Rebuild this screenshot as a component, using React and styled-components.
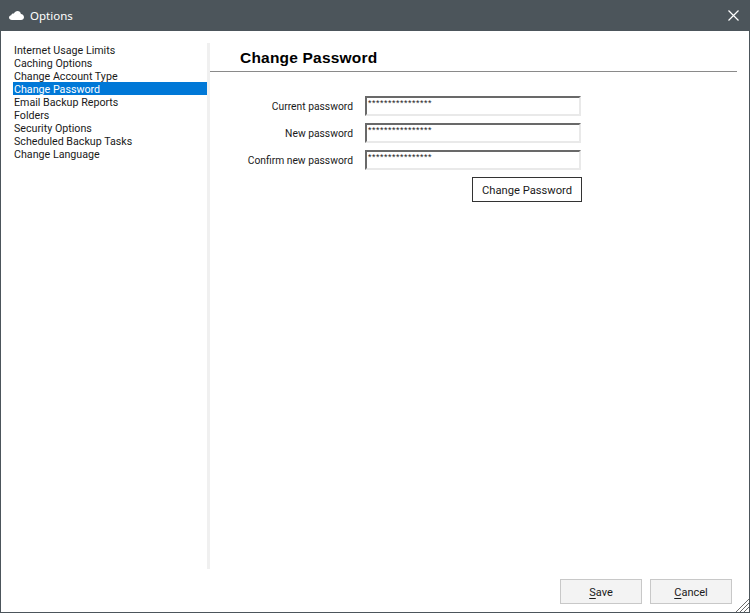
import React from "react";
import styled, { createGlobalStyle } from "styled-components";

const GlobalStyle = createGlobalStyle`
  html, body {
    margin: 0;
    padding: 0;
    background: #fff;
  }
  * {
    box-sizing: border-box;
  }
`;

const Window = styled.div`
  position: relative;
  width: 750px;
  height: 613px;
  display: flex;
  flex-direction: column;
  background: #fff;
  border: 1px solid #4c555b;
  border-top: 0;
  font-family: Roboto, "Liberation Sans", sans-serif;
  font-size: 11px;
  color: #1a1a1a;
`;

const TitleBar = styled.div`
  height: 31px;
  flex: none;
  display: flex;
  align-items: center;
  margin: 0 -1px;
  padding: 0 11px 0 9px;
  background: #4c555b;
  color: #fff;
  font-family: "Noto Sans", sans-serif;
  font-size: 11.5px;
`;

const TitleText = styled.span`
  margin-left: 6px;
  flex: 1;
`;

const Body = styled.div`
  flex: 1;
  display: flex;
  padding: 12px 12px 0;
  min-height: 0;
`;

const Sidebar = styled.ul`
  width: 194px;
  height: 526px;
  flex: none;
  list-style: none;
  margin: 0;
  padding: 0;
  font-size: 10.7px;
`;

const SidebarItem = styled.li`
  height: 13px;
  line-height: 15px;
  padding-left: 1px;
  white-space: nowrap;
  background: ${(p) => (p.$active ? "#0078d7" : "transparent")};
  color: ${(p) => (p.$active ? "#fff" : "#1a1a1a")};
`;

const Divider = styled.div`
  width: 3px;
  height: 526px;
  flex: none;
  background: #f0f0f0;
`;

const Panel = styled.div`
  flex: 1;
  height: 526px;
`;

const PanelHeader = styled.div`
  height: 29px;
  padding-left: 30px;
  border-bottom: 1px solid #8a8a8a;
  font-family: "Liberation Sans", sans-serif;
  font-size: 15.5px;
  font-weight: 700;
  letter-spacing: 0.2px;
  line-height: 29px;
  color: #000;
`;

const Form = styled.div`
  width: 372px;
  margin-top: 24px;
  display: flex;
  flex-direction: column;
  gap: 7px;
`;

const Row = styled.div`
  display: flex;
  align-items: center;
  justify-content: flex-end;
  height: 20px;
  gap: 12px;
  padding-right: 1px;
`;

const Label = styled.label`
  white-space: nowrap;
  font-size: 10.3px;
`;

const Input = styled.div`
  width: 216px;
  height: 20px;
  padding: 1px 0 0 1px;
  background: #fff;
  border: 2px solid #e9e9e9;
  border-top-color: #696969;
  border-left-color: #696969;
  font-family: "Liberation Sans", sans-serif;
  font-size: 9px;
  line-height: 9px;
  letter-spacing: 0.5px;
`;

const ButtonRow = styled.div`
  display: flex;
  justify-content: flex-end;
`;

const ChangeButton = styled.button`
  width: 110px;
  height: 25px;
  padding: 1px 0 0;
  background: #fff;
  border: 1px solid #333;
  font: inherit;
  font-size: 11.2px;
  color: #1a1a1a;
`;

const Footer = styled.div`
  height: 44px;
  flex: none;
  display: flex;
  justify-content: flex-end;
  gap: 8px;
  padding: 11px 17px 0 0;
`;

const FooterButton = styled.button`
  width: 82px;
  height: 25px;
  padding: 2px 0 0;
  background: #f3f3f3;
  border: 1px solid #c8c8c8;
  font: inherit;
  color: #1a1a1a;
  u {
    text-underline-offset: 2px;
  }
`;

const Grip = styled.svg`
  position: absolute;
  right: 0;
  bottom: 0;
`;

const items = [
  "Internet Usage Limits",
  "Caching Options",
  "Change Account Type",
  "Change Password",
  "Email Backup Reports",
  "Folders",
  "Security Options",
  "Scheduled Backup Tasks",
  "Change Language",
];

const fields = ["Current password", "New password", "Confirm new password"];

function CloudIcon() {
  return (
    <svg width="15" height="9" viewBox="0 0 15 9">
      <path
        d="M3 9C1.300 9 0 8 0 6.500 0 5.200 1 4.300 2.200 4.200 2.500 3 3.700 2.300 4.900 2.600 5.600 1 7 0 8.500 0c1.800 0 3.200 1.200 3.400 3C13.600 3.200 15 4.500 15 6.200 15 7.800 13.700 9 12 9z"
        fill="#fff"
      />
    </svg>
  );
}

function CloseIcon() {
  return (
    <svg width="11" height="11" viewBox="0 0 11 11">
      <path d="M.5.5l10 10M10.500.5l-10 10" stroke="#fff" strokeWidth="1.200" fill="none" />
    </svg>
  );
}

export default function App() {
  return (
    <>
      <GlobalStyle />
      <Window>
        <TitleBar>
          <CloudIcon />
          <TitleText>Options</TitleText>
          <CloseIcon />
        </TitleBar>
        <Body>
          <Sidebar>
            {items.map((item) => (
              <SidebarItem key={item} $active={item === "Change Password"}>
                {item}
              </SidebarItem>
            ))}
          </Sidebar>
          <Divider />
          <Panel>
            <PanelHeader>Change Password</PanelHeader>
            <Form>
              {fields.map((field) => (
                <Row key={field}>
                  <Label>{field}</Label>
                  <Input>****************</Input>
                </Row>
              ))}
              <ButtonRow>
                <ChangeButton>Change Password</ChangeButton>
              </ButtonRow>
            </Form>
          </Panel>
        </Body>
        <Footer>
          <FooterButton>
            <u>S</u>ave
          </FooterButton>
          <FooterButton>
            <u>C</u>ancel
          </FooterButton>
        </Footer>
        <Grip width="14" height="14" viewBox="0 0 14 14">
          <path d="M14 1L1 14M14 5L5 14M14 9L9 14" stroke="#6a6a6a" strokeWidth="1" fill="none" />
        </Grip>
      </Window>
    </>
  );
}
